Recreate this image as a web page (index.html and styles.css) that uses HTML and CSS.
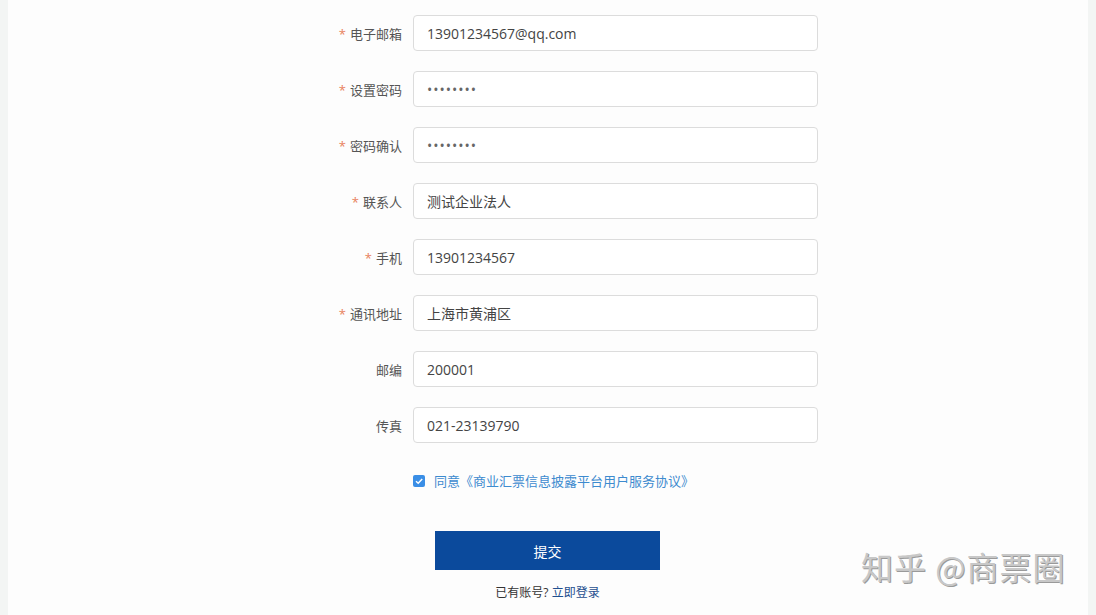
FILE: index.html
```html
<!DOCTYPE html>
<html lang="zh-CN">
<head>
  <meta charset="UTF-8" />
  <meta name="viewport" content="width=device-width, initial-scale=1.0"/>
  <title>注册</title>
  <link rel="stylesheet" href="styles.css">
</head>
<body>
  <div class="panel">
    <form class="reg-form">
      <div class="row">
        <label class="label"><span class="star">*</span>电子邮箱</label>
        <input class="field" type="text" value="13901234567@qq.com">
      </div>
      <div class="row">
        <label class="label"><span class="star">*</span>设置密码</label>
        <input class="field" type="password" value="12345678">
      </div>
      <div class="row">
        <label class="label"><span class="star">*</span>密码确认</label>
        <input class="field" type="password" value="12345678">
      </div>
      <div class="row">
        <label class="label"><span class="star">*</span>联系人</label>
        <input class="field" type="text" value="测试企业法人">
      </div>
      <div class="row">
        <label class="label"><span class="star">*</span>手机</label>
        <input class="field" type="text" value="13901234567">
      </div>
      <div class="row">
        <label class="label"><span class="star">*</span>通讯地址</label>
        <input class="field" type="text" value="上海市黄浦区">
      </div>
      <div class="row">
        <label class="label">邮编</label>
        <input class="field" type="text" value="200001">
      </div>
      <div class="row">
        <label class="label">传真</label>
        <input class="field" type="text" value="021-23139790">
      </div>

      <div class="agree">
        <span class="check">
          <svg width="12" height="12" viewBox="0 0 12 12"><rect width="12" height="12" rx="2" fill="#3a8ee6"/><path d="M3 6.2 L5.2 8.3 L9.2 4" stroke="#fff" stroke-width="1.5" fill="none"/></svg>
        </span>
        <span class="agree-text">同意《商业汇票信息披露平台用户服务协议》</span>
      </div>

      <button type="button" class="submit">提交</button>
      <p class="login-tip">已有账号? <a href="#">立即登录</a></p>
    </form>
    <div class="watermark">知乎 @商票圈</div>
  </div>
</body>
</html>
```

FILE: styles.css
```css
body {
  margin: 0;
  background-color: #f3f5f4;
  font-family: "Open Sans", "Noto Sans CJK SC", sans-serif;
}

.panel {
  position: relative;
  margin: 0 8px;
  height: 615px;
  background: #fdfdfd;
  overflow: hidden;
}

.reg-form {
  padding-top: 15px;
  margin-left: 312px;
}

.row {
  display: flex;
  align-items: center;
  margin-bottom: 20px;
}

.label {
  width: 82px;
  margin-right: 11px;
  text-align: right;
  font-size: 13px;
  color: #555;
}

.star {
  color: #e8805c;
  margin-right: 4px;
}

.field {
  box-sizing: border-box;
  width: 405px;
  height: 36px;
  padding: 0 13px;
  border: 1px solid #dcdcdc;
  border-radius: 4px;
  background: #fff;
  font-family: "Open Sans", "Noto Sans CJK SC", sans-serif;
  font-size: 14px;
  color: #444;
  outline: none;
}

.field[type="password"] {
  letter-spacing: 1px;
  color: #666;
}

.agree {
  display: flex;
  align-items: center;
  margin-left: 93px;
  padding-top: 8px;
  font-size: 13px;
}

.check {
  display: flex;
  margin-right: 9px;
}

.agree-text {
  color: #3d8bcf;
}

.submit {
  display: block;
  margin: 41px 0 0 115px;
  width: 225px;
  height: 39px;
  border: none;
  background: #0b4a9c;
  color: #fff;
  font-family: "Open Sans", "Noto Sans CJK SC", sans-serif;
  font-size: 14px;
  cursor: pointer;
}

.login-tip {
  margin: 13px 0 0 115px;
  width: 225px;
  text-align: center;
  font-size: 12px;
  color: #333;
}

.login-tip a {
  color: #1f4f8f;
  text-decoration: none;
}

.watermark {
  position: absolute;
  left: 853px;
  top: 543px;
  font-family: "Noto Sans CJK SC", sans-serif;
  font-size: 32px;
  color: #c8c8c8;
  text-shadow: 1px 1px 0 #9a9a9a;
  letter-spacing: 1px;
}
```
